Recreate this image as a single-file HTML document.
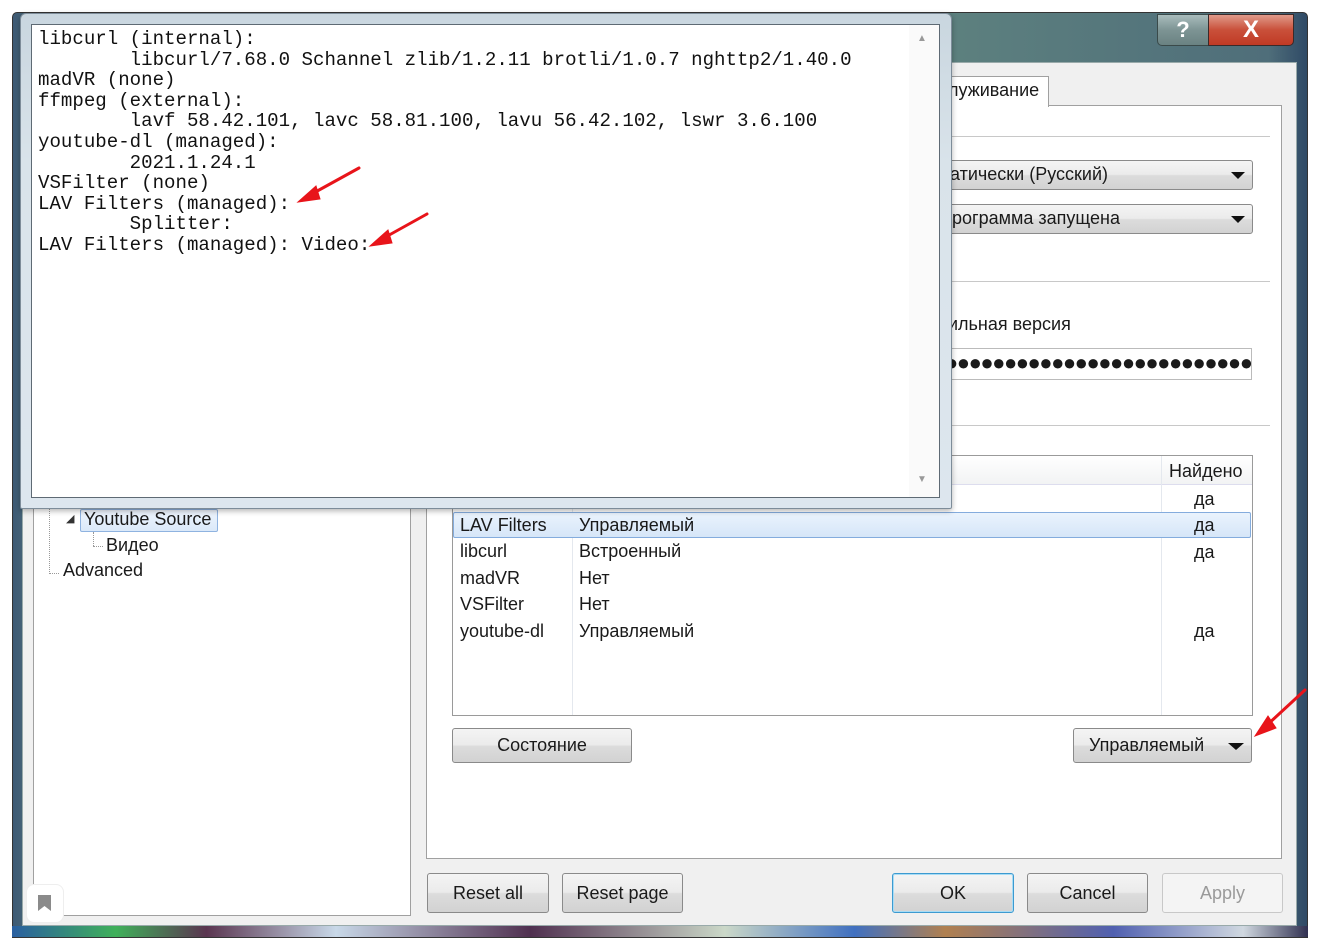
<!DOCTYPE html>
<html><head><meta charset="utf-8"><style>
*{margin:0;padding:0;box-sizing:border-box}
body{width:1319px;height:950px;background:#fff;position:relative;overflow:hidden;font-family:"Liberation Sans","DejaVu Sans",sans-serif;font-size:18px;color:#1a1a1a}
.a{position:absolute}
.btn{position:absolute;border:1px solid #8a8a8a;border-radius:3px;background:linear-gradient(#f4f4f4 0%,#ebebeb 48%,#dcdcdc 52%,#d2d2d2 100%);text-align:center;color:#1a1a1a}
.t{position:absolute;white-space:nowrap}
pre{font-family:"Liberation Mono",monospace;font-size:19.1px;line-height:20.6px;color:#111}
.tri{position:absolute;width:0;height:0;border-left:7px solid transparent;border-right:7px solid transparent;border-top:7px solid #111}
</style></head><body>
<div class="a" style="left:12px;top:12px;width:1296px;height:926px;background:linear-gradient(90deg,#3d5a75 0%,#587878 3%,#6a8a86 30%,#5e827f 70%,#4f6e7a 97%,#2f4a66 100%);border:1px solid #333;border-radius:5px 5px 0 0"></div>
<div class="a" style="left:12px;top:926px;width:1296px;height:11px;background:linear-gradient(90deg,#2a5fa0,#3fb05a 8%,#5a3550 15%,#c8d8e8 25%,#503050 40%,#cbd8c8 55%,#4070c0 65%,#b08050 72%,#5060b0 85%,#d0d8e0 95%,#303050)"></div>
<div class="a" style="left:1157px;top:14px;width:52px;height:32px;border:1px solid #3a4a4a;border-radius:0 0 0 5px;background:linear-gradient(#a9bcbc,#7d9494 50%,#6a8282);color:#fff;font-size:22px;font-weight:bold;text-align:center;line-height:30px">?</div>
<div class="a" style="left:1208px;top:14px;width:86px;height:32px;border:1px solid #3a2a2a;border-radius:0 0 5px 0;background:linear-gradient(#e09a8a,#c9503a 50%,#c03a25);color:#fff;font-size:24px;font-weight:bold;text-align:center;line-height:30px">X</div>
<div class="a" style="left:22px;top:62px;width:1275px;height:864px;background:#f0f0f0;border:1px solid #9aa"></div>
<div class="a" style="left:33px;top:490px;width:378px;height:426px;background:#fff;border:1px solid #a0a0a0"></div>
<div class="a" style="left:49px;top:490px;width:0;height:84px;border-left:1px dotted #999"></div>
<div class="a" style="left:49px;top:573px;width:10px;border-top:1px dotted #999"></div>
<div class="a" style="left:93px;top:532px;width:0;height:14px;border-left:1px dotted #999"></div>
<div class="a" style="left:93px;top:546px;width:10px;border-top:1px dotted #999"></div>
<div class="t" style="left:66px;top:512px;font-size:11px;color:#333">◢</div>
<div class="a" style="left:80px;top:509px;width:138px;height:23px;background:linear-gradient(#eef5fd,#dbe9f9);border:1px solid #8fb3e0;border-radius:2px"></div>
<div class="t" style="left:84px;top:509px">Youtube Source</div>
<div class="t" style="left:106px;top:535px">Видео</div>
<div class="t" style="left:63px;top:560px">Advanced</div>
<div class="a" style="left:26px;top:884px;width:38px;height:39px;background:#fff;border:1px solid #eee;border-radius:8px"></div>
<svg class="a" style="left:38px;top:895px" width="14" height="17"><path d="M0 0H13V16L6.5 11L0 16Z" fill="#8a8a8a"/></svg>
<div class="a" style="left:426px;top:105px;width:856px;height:754px;background:#fff;border:1px solid #a0a0a0"></div>
<div class="a" style="left:930px;top:76px;width:119px;height:31px;background:#fff;border:1px solid #a0a0a0;border-bottom:none"></div>
<div class="t" style="left:948px;top:80px">луживание</div>
<div class="a" style="left:940px;top:136px;width:330px;border-top:1px solid #c8c8c8"></div>
<div class="a" style="left:940px;top:281px;width:330px;border-top:1px solid #c8c8c8"></div>
<div class="a" style="left:940px;top:425px;width:330px;border-top:1px solid #c8c8c8"></div>
<div class="btn" style="left:925px;top:160px;width:328px;height:30px;text-align:left"><span class="t" style="left:24px;top:3px">атически (Русский)</span><span class="tri" style="left:305px;top:11px"></span></div>
<div class="btn" style="left:925px;top:204px;width:328px;height:30px;text-align:left"><span class="t" style="left:26px;top:3px">рограмма запущена</span><span class="tri" style="left:305px;top:11px"></span></div>
<div class="t" style="left:948px;top:314px">ильная версия</div>
<div class="a" style="left:930px;top:348px;width:322px;height:32px;background:#fff;border:1px solid #bbb;overflow:hidden"><span class="t" style="left:14px;top:1px;font-size:22px;letter-spacing:-1.5px">●●●●●●●●●●●●●●●●●●●●●●●●●●●●●●●●●</span></div>
<div class="a" style="left:452px;top:455px;width:801px;height:261px;background:#fff;border:1px solid #9a9a9a"></div>
<div class="a" style="left:453px;top:456px;width:799px;height:29px;background:linear-gradient(#fff,#f2f3f4);border-bottom:1px solid #dde"></div>
<div class="a" style="left:1161px;top:456px;height:259px;border-left:1px solid #e4e8ee"></div>
<div class="a" style="left:572px;top:486px;height:229px;border-left:1px solid #e4e8ee"></div>
<div class="t" style="left:1169px;top:461px">Найдено</div>
<div class="t" style="left:1194px;top:489px">да</div>
<div class="a" style="left:453px;top:512px;width:798px;height:26px;background:linear-gradient(#eaf3fd,#d6e6f8);border:1px solid #84acdd;border-radius:2px"></div>
<div class="t" style="left:460px;top:515px">LAV Filters</div><div class="t" style="left:579px;top:515px">Управляемый</div><div class="t" style="left:1194px;top:515px">да</div>
<div class="t" style="left:460px;top:541px">libcurl</div><div class="t" style="left:579px;top:541px">Встроенный</div><div class="t" style="left:1194px;top:542px">да</div>
<div class="t" style="left:460px;top:568px">madVR</div><div class="t" style="left:579px;top:568px">Нет</div>
<div class="t" style="left:460px;top:594px">VSFilter</div><div class="t" style="left:579px;top:594px">Нет</div>
<div class="t" style="left:460px;top:621px">youtube-dl</div><div class="t" style="left:579px;top:621px">Управляемый</div><div class="t" style="left:1194px;top:621px">да</div>
<div class="btn" style="left:452px;top:728px;width:180px;height:35px;line-height:33px">Состояние</div>
<div class="btn" style="left:1073px;top:728px;width:179px;height:35px;line-height:33px;text-align:left;padding-left:15px">Управляемый<span class="tri" style="left:154px;top:14px;border-left-width:8px;border-right-width:8px"></span></div>
<div class="btn" style="left:427px;top:873px;width:122px;height:40px;line-height:38px">Reset all</div>
<div class="btn" style="left:562px;top:873px;width:121px;height:40px;line-height:38px">Reset page</div>
<div class="btn" style="left:892px;top:873px;width:122px;height:40px;line-height:38px;border:1px solid #3c9ad0;box-shadow:inset 0 0 0 1px #a8dcf5">OK</div>
<div class="btn" style="left:1027px;top:873px;width:121px;height:40px;line-height:38px">Cancel</div>
<div class="btn" style="left:1162px;top:873px;width:121px;height:40px;line-height:38px;background:#f4f4f4;border-color:#c8c8c8;color:#9a9a9a">Apply</div>
<div class="a" style="left:20px;top:13px;width:932px;height:496px;background:linear-gradient(#c9d6df,#d9e3ea 30%,#dde6ee);border:1px solid #7d8c99;border-radius:6px 6px 2px 2px;box-shadow:0 2px 6px rgba(0,0,0,.3)"></div>
<div class="a" style="left:31px;top:24px;width:909px;height:474px;background:#fff;border:1px solid #5e6a74"></div>
<div class="a" style="left:909px;top:25px;width:30px;height:472px;background:#fafafa"></div>
<div class="t" style="left:917px;top:33px;font-size:10px;color:#999">▲</div>
<div class="t" style="left:917px;top:474px;font-size:10px;color:#999">▼</div>
<pre class="a" style="left:38px;top:29px">libcurl (internal):
        libcurl/7.68.0 Schannel zlib/1.2.11 brotli/1.0.7 nghttp2/1.40.0
madVR (none)
ffmpeg (external):
        lavf 58.42.101, lavc 58.81.100, lavu 56.42.102, lswr 3.6.100
youtube-dl (managed):
        2021.1.24.1
VSFilter (none)
LAV Filters (managed):
        Splitter:
LAV Filters (managed): Video:</pre>
<svg class="a" style="left:0;top:0" width="1319" height="950">
<g stroke="#e8141a" stroke-width="3" fill="#e8141a" stroke-linecap="round">
<line x1="359" y1="168" x2="310" y2="195"/><path d="M298 202L316 186L320 199Z" stroke-width="1"/>
<line x1="427" y1="214" x2="382" y2="239"/><path d="M370 246L388 230L392 243Z" stroke-width="1"/>
<line x1="1305" y1="690" x2="1266" y2="726"/><path d="M1255 736L1268 716L1276 728Z" stroke-width="1"/>
</g></svg>
</body></html>
